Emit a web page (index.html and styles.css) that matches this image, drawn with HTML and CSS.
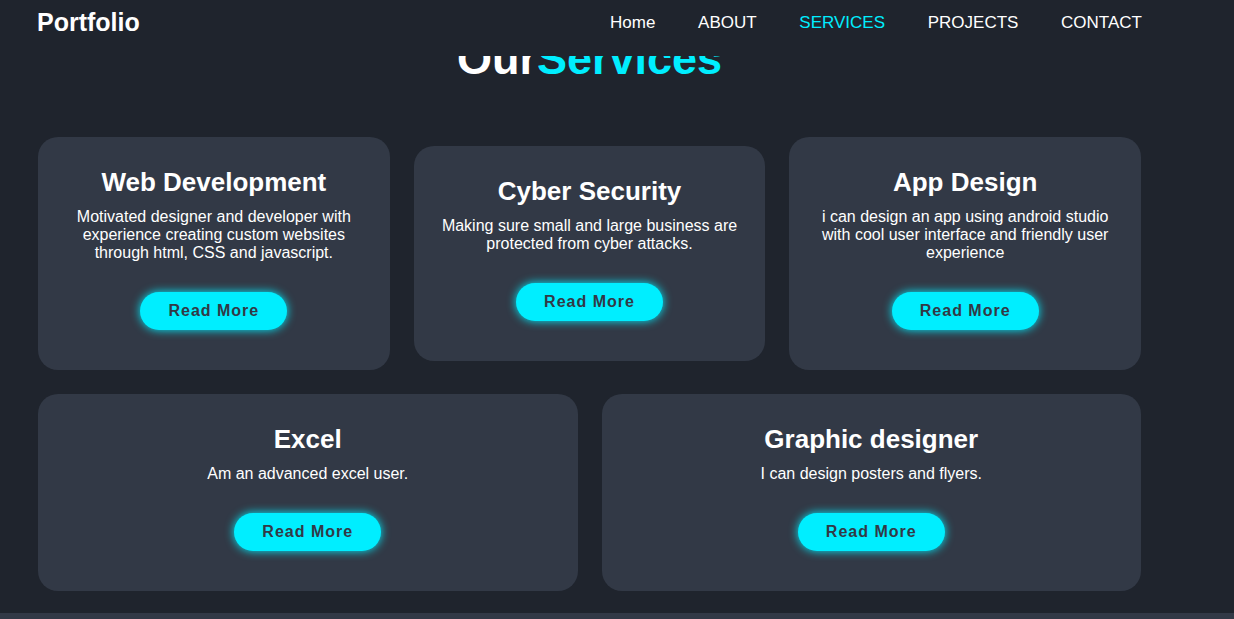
FILE: index.html
```html
<!DOCTYPE html>
<html lang="en">
<head>
<meta charset="utf-8">
<title>Portfolio</title>
<link rel="stylesheet" href="styles.css">
</head>
<body>
<header class="header">
  <a class="logo" href="#">Portfolio</a>
  <nav class="navbar">
    <a href="#">Home</a>
    <a href="#">ABOUT</a>
    <a href="#" class="active">SERVICES</a>
    <a href="#">PROJECTS</a>
    <a href="#">CONTACT</a>
  </nav>
</header>

<section class="services">
  <h2 class="heading">Our<span>Services</span></h2>
  <div class="services-container">
    <div class="services-box">
      <h3>Web Development</h3>
      <p>Motivated designer and developer with experience creating custom websites through html, CSS and javascript.</p>
      <a href="#" class="btn">Read More</a>
    </div>
    <div class="services-box">
      <h3>Cyber Security</h3>
      <p>Making sure small and large business are protected from cyber attacks.</p>
      <a href="#" class="btn">Read More</a>
    </div>
    <div class="services-box">
      <h3>App Design</h3>
      <p>i can design an app using android studio with cool user interface and friendly user experience</p>
      <a href="#" class="btn">Read More</a>
    </div>
    <div class="services-box">
      <h3>Excel</h3>
      <p>Am an advanced excel user.</p>
      <a href="#" class="btn">Read More</a>
    </div>
    <div class="services-box">
      <h3>Graphic designer</h3>
      <p>I can design posters and flyers.</p>
      <a href="#" class="btn">Read More</a>
    </div>
  </div>
</section>

<footer class="footer"></footer>
</body>
</html>
```

FILE: styles.css
```css
* {
  box-sizing: border-box;
}

body {
  margin: 0;
  background: #1f242d;
  color: #fff;
  font-family: "Liberation Sans", Arial, sans-serif;
}

a {
  text-decoration: none;
}

.header {
  position: fixed;
  top: 0;
  left: 0;
  width: 100%;
  height: 56px;
  padding: 0 92px 12px 37px;
  background: #1f242d;
  display: flex;
  align-items: center;
  justify-content: space-between;
  z-index: 10;
}

.logo {
  font-size: 25px;
  font-weight: 700;
  color: #fff;
}

.navbar {
  display: flex;
  gap: 42.7px;
  margin-top: 2px;
}

.navbar a {
  font-size: 17px;
  color: #fff;
}

.navbar a.active {
  color: #0ef;
}

.services {
  padding: 33px 93px 22px 38px;
}

.heading {
  margin: 0 0 52px;
  text-align: center;
  font-size: 45px;
  font-weight: 700;
  line-height: normal;
}

.heading span {
  color: #0ef;
}

.services-container {
  display: flex;
  flex-wrap: wrap;
  align-items: center;
  gap: 24px;
}

.services-box {
  flex: 1 1 300px;
  background: #323946;
  border-radius: 20px;
  padding: 30px 25px 40px;
  text-align: center;
}

.services-box h3 {
  margin: 0 0 10px;
  font-size: 26px;
  font-weight: 700;
  line-height: normal;
}

.services-box p {
  margin: 0 0 30px;
  font-size: 16px;
  line-height: normal;
}

.btn {
  display: inline-block;
  padding: 10px 28px;
  background: #0ef;
  border-radius: 40px;
  box-shadow: 0 0 10px #0ef;
  font-size: 16px;
  line-height: normal;
  font-weight: 700;
  letter-spacing: 1px;
  color: #323946;
}

.footer {
  height: 60px;
  background: #323946;
}
```
